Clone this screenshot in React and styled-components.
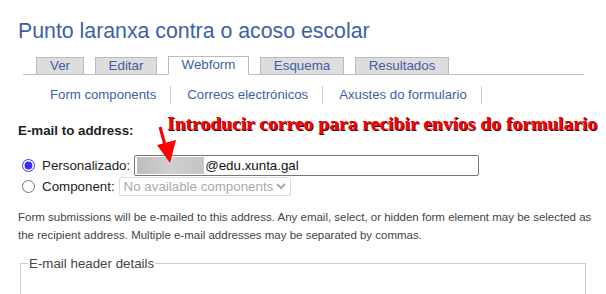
import React from "react";
import styled, { createGlobalStyle } from "styled-components";

const GlobalStyle = createGlobalStyle`
  body {
    margin: 0;
    background: #fff;
    font-family: "Liberation Sans", Arial, sans-serif;
    color: #222;
  }
`;

const Page = styled.div`
  position: relative;
  width: 606px;
  height: 294px;
  overflow: hidden;
  padding: 0 18px;
  box-sizing: border-box;
`;

const Title = styled.h1`
  margin: 0;
  padding-top: 16px;
  font-size: 21.3px;
  font-weight: normal;
  line-height: 30px;
  color: #3d5fa6;
`;

const Tabs = styled.ul`
  display: flex;
  gap: 11px;
  list-style: none;
  margin: 10px 4px 0 5px;
  padding: 0 0 0 13px;
  border-bottom: 1px solid #bbb;
  height: 18px;
  align-items: flex-end;
`;

const Tab = styled.li`
  box-sizing: border-box;
  width: ${(p) => p.$w}px;
  height: ${(p) => (p.$active ? "19px" : "17px")};
  margin-bottom: ${(p) => (p.$active ? "-1px" : "0")};
  background: ${(p) => (p.$active ? "#fff" : "#ddd")};
  border: 1px solid #bbb;
  border-bottom: ${(p) => (p.$active ? "1px solid #fff" : "none")};
  color: #3d5fa6;
  font-size: 13.33px;
  line-height: 16px;
  text-align: center;
`;

const SubTabs = styled.div`
  display: flex;
  padding: 11px 0 0 32px;
  height: 18px;
  align-items: center;
`;

const SubTab = styled.span`
  font-size: 13.2px;
  color: #3d5fa6;
  padding: 0 14px 0 ${(p) => (p.$first ? 0 : 16)}px;
  border-right: 1px solid #ccc;
  line-height: 18px;
`;

const Label = styled.div`
  margin-top: 19px;
  font-size: 13.33px;
  font-weight: bold;
  color: #222;
  line-height: 16px;
`;

const Hint = styled.div`
  position: absolute;
  left: 167px;
  top: 113px;
  font-family: "Liberation Serif", "Times New Roman", serif;
  font-weight: bold;
  font-size: 19.6px;
  color: #f00;
  text-shadow: 1px 1px 0 #300;
  white-space: nowrap;
`;

const Arrow = styled.svg`
  position: absolute;
  left: 150px;
  top: 125px;
`;

const Options = styled.div`
  margin-top: 16px;
  display: flex;
  flex-direction: column;
  gap: 1px;
  padding-left: 3px;
`;

const OptionRow = styled.label`
  display: flex;
  align-items: center;
  font-size: 13.33px;
  color: #222;
  height: 20px;
`;

const Radio = styled.input`
  margin: 0 7px 0 1px;
  width: 13px;
  height: 13px;
  accent-color: #3b2ff5;
`;

const TextBox = styled.div`
  display: flex;
  align-items: center;
  box-sizing: border-box;
  width: 345px;
  height: 21px;
  margin-left: 4px;
  border: 1px solid #767676;
  border-radius: 2px;
  padding: 0 2px;
  font-size: 13.33px;
  color: #111;
`;

const Blur = styled.span`
  display: inline-block;
  width: 67px;
  height: 17px;
  margin-right: 1px;
  background: linear-gradient(90deg, #bdbdbd, #cfcfcf 50%, #c4c4c4);
`;

const Select = styled.div`
  display: flex;
  align-items: center;
  justify-content: space-between;
  box-sizing: border-box;
  width: 172px;
  height: 19px;
  margin-left: 4px;
  border: 1px solid #ddd;
  border-radius: 2px;
  padding: 0 4px;
  font-size: 13.33px;
  color: #aaa;
`;

const Description = styled.p`
  margin: 12px -12px 0 0;
  font-size: 11.5px;
  line-height: 18px;
  color: #444;
  white-space: nowrap;
`;

const Fieldset = styled.fieldset`
  margin: 12px 2px 0 2px;
  padding: 0 10px 40px;
  border: 1px solid #ccc;
  border-bottom: none;
  legend {
    padding: 0 1px;
    font-size: 13.33px;
    color: #444;
    margin-left: -3px;
  }
`;

const tabs = [
  { t: "Ver", w: 48 },
  { t: "Editar", w: 62 },
  { t: "Webform", w: 81, active: true },
  { t: "Esquema", w: 84 },
  { t: "Resultados", w: 94 },
];

export default function App() {
  return (
    <Page>
      <GlobalStyle />
      <Title>Punto laranxa contra o acoso escolar</Title>
      <Tabs>
        {tabs.map((x) => (
          <Tab key={x.t} $active={x.active} $w={x.w}>
            {x.t}
          </Tab>
        ))}
      </Tabs>
      <SubTabs>
        <SubTab $first>Form components</SubTab>
        <SubTab>Correos electrónicos</SubTab>
        <SubTab>Axustes do formulario</SubTab>
      </SubTabs>
      <Label>E-mail to address:</Label>
      <Hint>Introducir correo para recibir envíos do formulario</Hint>
      <Arrow width="30" height="42" viewBox="0 0 30 42">
        <line x1="10" y1="2" x2="15" y2="20" stroke="#f00" strokeWidth="3" />
        <polygon points="7,20 26,15 20,38" fill="#f00" />
      </Arrow>
      <Options>
        <OptionRow>
          <Radio type="radio" name="to" defaultChecked />
          Personalizado:
          <TextBox>
            <Blur />
            @edu.xunta.gal
          </TextBox>
        </OptionRow>
        <OptionRow>
          <Radio type="radio" name="to" />
          Component:
          <Select>
            No available components
            <svg width="10" height="8" viewBox="0 0 10 8">
              <path d="M1 2 L5 6 L9 2" stroke="#aaa" strokeWidth="2" fill="none" />
            </svg>
          </Select>
        </OptionRow>
      </Options>
      <Description>
        Form submissions will be e-mailed to this address. Any email, select, or hidden form element may be selected as
        <br />
        the recipient address. Multiple e-mail addresses may be separated by commas.
      </Description>
      <Fieldset>
        <legend>E-mail header details</legend>
      </Fieldset>
    </Page>
  );
}
